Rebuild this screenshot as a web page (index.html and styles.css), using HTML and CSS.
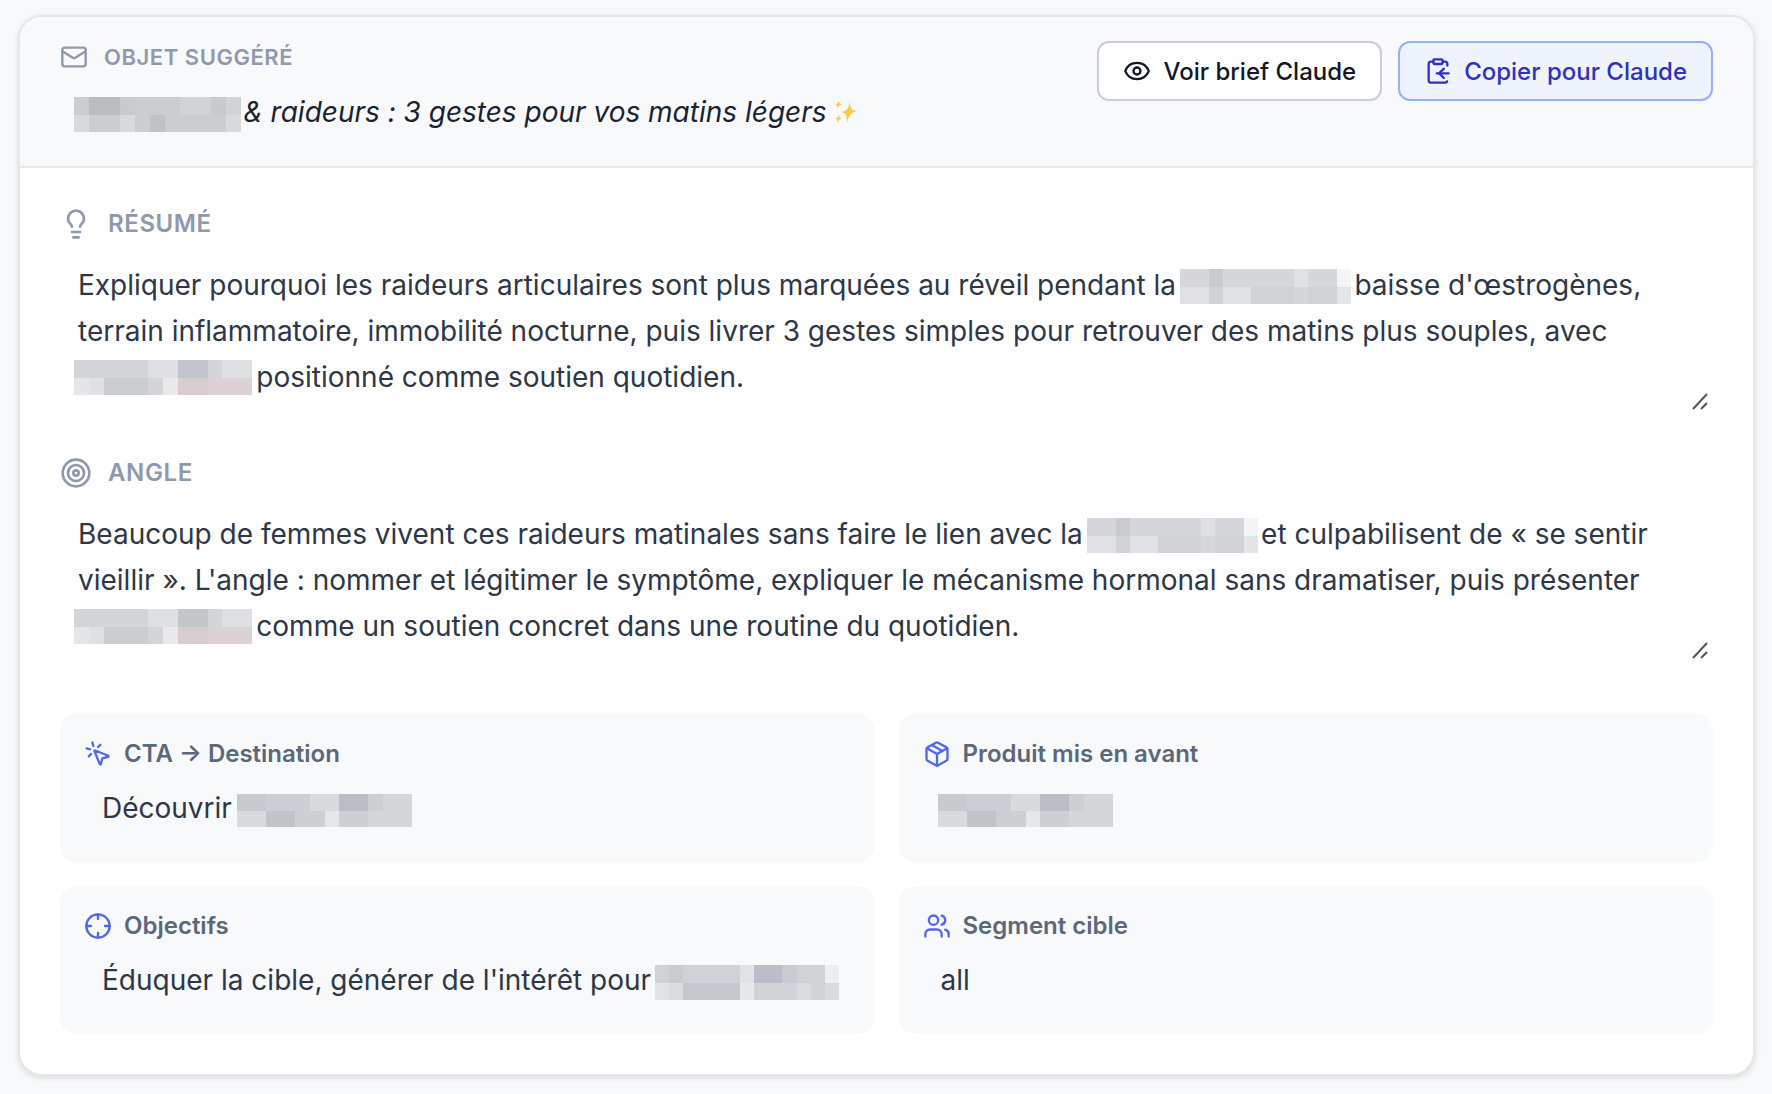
FILE: index.html
```html
<!DOCTYPE html>
<html lang="fr">
<head>
<meta charset="utf-8">
<meta name="viewport" content="width=device-width, initial-scale=1">
<title>Brief e-mail</title>
<link rel="stylesheet" href="styles.css">
</head>
<body>

<!-- masques des noms -->
<svg class="defs" aria-hidden="true">
    <symbol id="mask_sujet" viewBox="0 0 11 2" preserveAspectRatio="none">
        <path fill="#cbcdd1" d="M0 0h11v2H0z"/>
        <path fill="#b9bdc2" d="M1 0h2v1H1z"/>
        <path fill="#c7cbce" d="M3 0h1v1H3zM9 0h1v1H9z"/>
        <path fill="#d2d3d7" d="M7 0h2v1H7zM10 0h1v1h-1z"/>
        <path fill="#d9dadd" d="M0 1h1v1H0zM3 1h1v1H3zM10 1h1v1h-1z"/>
        <path fill="#bfc3c8" d="M5 1h1v1H5z"/>
    </symbol>
    <symbol id="mask_theme" viewBox="0 0 12 2" preserveAspectRatio="none">
        <path fill="#d6d7db" d="M0 0h12v2H0z"/>
        <path fill="#cacbce" d="M2 0h1v1H2z"/>
        <path fill="#dfe1e5" d="M8 0h1v1H8zM0 1h2v1H0zM3 1h2v1H3z"/>
        <path fill="#d0d2d5" d="M2 1h1v1H2zM5 1h3v1H5zM9 1h2v1H9z"/>
        <path fill="#f4f5f6" d="M11 0h1v1h-1z"/>
        <path fill="#e4e5e8" d="M11 1h1v1h-1z"/>
    </symbol>
    <symbol id="mask_marque" viewBox="0 0 12 2" preserveAspectRatio="none">
        <path fill="#d3d5d8" d="M0 0h12v2H0z"/>
        <path fill="#dfe0e3" d="M5 0h2v1H5zM10 0h2v1h-2zM1 1h1v1H1z"/>
        <path fill="#c2c6cb" d="M7 0h2v1H7z"/>
        <path fill="#e5e6e9" d="M0 1h1v1H0z"/>
        <path fill="#cacdd1" d="M2 1h3v1H2z"/>
        <path fill="#ebe8ea" d="M6 1h1v1H6z"/>
        <path fill="#d8ccd1" d="M7 1h2v1H7z"/>
        <path fill="#dcd1d4" d="M9 1h3v1H9z"/>
    </symbol>
    <symbol id="mask_produit" viewBox="0 0 12 2" preserveAspectRatio="none">
        <path fill="#cccfd3" d="M0 0h12v2H0z"/>
        <path fill="#c7cacf" d="M0 0h2v1H0z"/>
        <path fill="#d9dadd" d="M5 0h2v1H5zM0 1h2v1H0z"/>
        <path fill="#babdc6" d="M7 0h2v1H7z"/>
        <path fill="#d4d6da" d="M10 0h2v1h-2zM9 1h3v1H9z"/>
        <path fill="#c1c4c9" d="M2 1h2v1H2z"/>
        <path fill="#e6e7eb" d="M6 1h1v1H6z"/>
    </symbol>
    <symbol id="mask_objectif" viewBox="0 0 13 2" preserveAspectRatio="none">
        <path fill="#cfd2d6" d="M0 0h13v2H0z"/>
        <path fill="#c8cbcf" d="M1 0h1v1H1zM9 0h1v1H9z"/>
        <path fill="#e1e3e6" d="M6 0h1v1H6zM0 1h1v1H0z"/>
        <path fill="#bbbec8" d="M7 0h2v1H7z"/>
        <path fill="#edeef0" d="M12 0h1v1h-1z"/>
        <path fill="#dadce0" d="M1 1h1v1H1zM10 1h1v1h-1zM12 1h1v1h-1z"/>
        <path fill="#c5c8cd" d="M2 1h4v1H2z"/>
        <path fill="#e6e8ea" d="M6 1h1v1H6z"/>
    </symbol>
</svg>

<main class="card">
    <header class="card_head">
        <div class="subject">
            <label class="title title_small" for="objet">
                <svg class="icon" viewBox="0 0 24 24"><rect x="2" y="4" width="20" height="16" rx="2"/><path d="m22 7-8.97 5.7a1.94 1.94 0 0 1-2.06 0L2 7"/></svg>
                OBJET SUGGÉRÉ
            </label>
            <div class="field">
                <input id="objet" class="value value_italic" type="text" value="&nbsp;&nbsp;&nbsp;&nbsp;&nbsp;&nbsp;&nbsp;&nbsp;&nbsp;&nbsp;&nbsp;&nbsp;&nbsp;&nbsp;&nbsp;&nbsp;&nbsp;&nbsp;&nbsp;&nbsp;&nbsp;&amp; raideurs : 3 gestes pour vos matins légers">
                <svg class="mask mask_sujet"><use href="#mask_sujet"/></svg>
                <svg class="sparkles" viewBox="0 0 24 24"><path d="M16 1c0 7 1 10 8 10-7 1.500-9 4-11 12 0-8-1-10-6-11 6-1 8-4 9-11z"/><path d="M5 0c0 3 .5 4 3 4.500C5.500 5 4.500 6 3.500 9 3.500 6 3 5 1 4.500 3.500 4 4.200 3 5 0zM5 14c0 3 .5 4 3 4.500-2.500.5-3.500 1.500-4.500 5 0-3.500-.5-4.500-2.500-5 2.500-.5 3.200-1.500 4-4.500z"/></svg>
            </div>
        </div>
        <div class="actions">
            <button class="btn" type="button">
                <svg class="icon" viewBox="0 0 24 24"><path d="M2.062 12.348a1 1 0 0 1 0-.696 10.750 10.750 0 0 1 19.876 0 1 1 0 0 1 0 .696 10.750 10.750 0 0 1-19.876 0"/><circle cx="12" cy="12" r="3"/></svg>
                Voir brief Claude
            </button>
            <button class="btn btn_blue" type="button">
                <svg class="icon" viewBox="0 0 24 24"><path d="M11 14h10"/><path d="M16 4h2a2 2 0 0 1 2 2v1.344"/><path d="m17 18-4-4 4-4"/><path d="M8 4H6a2 2 0 0 0-2 2v14a2 2 0 0 0 2 2h12a2 2 0 0 0 1.793-1.113"/><rect x="8" y="2" width="8" height="4" rx="1"/></svg>
                Copier pour Claude
            </button>
        </div>
    </header>

    <div class="card_body">
        <section class="block">
            <label class="title" for="resume">
                <svg class="icon" viewBox="0 0 24 24"><path d="M15 14c.2-1 .7-1.700 1.500-2.500 1-.9 1.500-2.200 1.500-3.500A6 6 0 0 0 6 8c0 1 .2 2.200 1.500 3.500.7.7 1.300 1.500 1.500 2.500"/><path d="M9 18h6"/><path d="M10 22h4"/></svg>
                RÉSUMÉ
            </label>
            <div class="field">
                <textarea id="resume" class="value" rows="3">Expliquer pourquoi les raideurs articulaires sont plus marquées au réveil pendant la&#8239;&nbsp;&nbsp;&nbsp;&nbsp;&nbsp;&nbsp;&nbsp;&nbsp;&nbsp;&nbsp;&nbsp;&nbsp;&nbsp;&nbsp;&nbsp;&nbsp;&nbsp;&nbsp;&nbsp;&nbsp;&nbsp;&nbsp;baisse d'œstrogènes, terrain inflammatoire, immobilité nocturne, puis livrer 3 gestes simples pour retrouver des matins plus souples, avec &#8239;&nbsp;&nbsp;&nbsp;&nbsp;&nbsp;&nbsp;&nbsp;&nbsp;&nbsp;&nbsp;&nbsp;&nbsp;&nbsp;&nbsp;&nbsp;&nbsp;&nbsp;&nbsp;&nbsp;&nbsp;&nbsp;&nbsp;positionné comme soutien quotidien.</textarea>
                <svg class="mask mask_resume"><use href="#mask_theme"/></svg>
                <svg class="mask mask_marque"><use href="#mask_marque"/></svg>
                <svg class="grip" viewBox="0 0 20 20"><path d="M2 17 16 2M10 17l6-6"/></svg>
            </div>
        </section>

        <section class="block">
            <label class="title" for="angle">
                <svg class="icon" viewBox="0 0 24 24"><circle cx="12" cy="12" r="10"/><circle cx="12" cy="12" r="6"/><circle cx="12" cy="12" r="2"/></svg>
                ANGLE
            </label>
            <div class="field">
                <textarea id="angle" class="value" rows="3">Beaucoup de femmes vivent ces raideurs matinales sans faire le lien avec la&#8239;&nbsp;&nbsp;&nbsp;&nbsp;&nbsp;&nbsp;&nbsp;&nbsp;&nbsp;&nbsp;&nbsp;&nbsp;&nbsp;&nbsp;&nbsp;&nbsp;&nbsp;&nbsp;&nbsp;&nbsp;&nbsp;&nbsp;et culpabilisent de « se sentir vieillir ». L'angle : nommer et légitimer le symptôme, expliquer le mécanisme hormonal sans dramatiser, puis présenter &#8239;&nbsp;&nbsp;&nbsp;&nbsp;&nbsp;&nbsp;&nbsp;&nbsp;&nbsp;&nbsp;&nbsp;&nbsp;&nbsp;&nbsp;&nbsp;&nbsp;&nbsp;&nbsp;&nbsp;&nbsp;&nbsp;&nbsp;comme un soutien concret dans une routine du quotidien.</textarea>
                <svg class="mask mask_angle"><use href="#mask_theme"/></svg>
                <svg class="mask mask_marque"><use href="#mask_marque"/></svg>
                <svg class="grip" viewBox="0 0 20 20"><path d="M2 17 16 2M10 17l6-6"/></svg>
            </div>
        </section>

        <div class="grid">
            <div class="tile">
                <label class="tile_title" for="cta">
                    <svg class="icon" viewBox="0 0 24 24"><path d="M14 4.100 12 6"/><path d="m5.100 8-2.900-.8"/><path d="m6 12-1.900 2"/><path d="M7.200 2.200 8 5.100"/><path d="M9.037 9.690a.498.498 0 0 1 .653-.653l11 4.500a.5.5 0 0 1-.074.949l-4.349 1.041a1 1 0 0 0-.740.739l-1.040 4.350a.5.5 0 0 1-.950.074z"/></svg>
                    CTA → Destination
                </label>
                <div class="field">
                    <input id="cta" class="value" type="text" value="Découvrir">
                    <svg class="mask mask_cta"><use href="#mask_produit"/></svg>
                </div>
            </div>
            <div class="tile">
                <label class="tile_title" for="produit">
                    <svg class="icon" viewBox="0 0 24 24"><path d="M11 21.730a2 2 0 0 0 2 0l7-4A2 2 0 0 0 21 16V8a2 2 0 0 0-1-1.730l-7-4a2 2 0 0 0-2 0l-7 4A2 2 0 0 0 3 8v8a2 2 0 0 0 1 1.730z"/><path d="M12 22V12"/><path d="M3.290 7 12 12l8.710-5"/><path d="m7.500 4.270 9 5.150"/></svg>
                    Produit mis en avant
                </label>
                <div class="field">
                    <input id="produit" class="value" type="text">
                    <svg class="mask mask_produit"><use href="#mask_produit"/></svg>
                </div>
            </div>
            <div class="tile">
                <label class="tile_title" for="objectifs">
                    <svg class="icon" viewBox="0 0 24 24"><circle cx="12" cy="12" r="10"/><path d="M22 12h-4M6 12H2M12 6V2M12 22v-4"/></svg>
                    Objectifs
                </label>
                <div class="field">
                    <input id="objectifs" class="value" type="text" value="Éduquer la cible, générer de l'intérêt pour">
                    <svg class="mask mask_objectif"><use href="#mask_objectif"/></svg>
                </div>
            </div>
            <div class="tile">
                <label class="tile_title" for="segment">
                    <svg class="icon" viewBox="0 0 24 24"><path d="M16 21v-2a4 4 0 0 0-4-4H6a4 4 0 0 0-4 4v2"/><circle cx="9" cy="7" r="4"/><path d="M22 21v-2a4 4 0 0 0-3-3.870"/><path d="M16 3.130a4 4 0 0 1 0 7.750"/></svg>
                    Segment cible
                </label>
                <div class="field">
                    <input id="segment" class="value" type="text" value="all">
                </div>
            </div>
        </div>
    </div>
</main>

</body>
</html>
```
FILE: styles.css
```css
*
{
box-sizing: border-box;
}

body
{
margin: 0;
padding: 15px 17px 18px 18px;
background-color: #f8f9fb;
font-family: Inter, "Liberation Sans", sans-serif;
color: #2d3748;
}

.defs
{
display: none;
}

.icon
{
width: 28px;
height: 28px;
flex: none;
fill: none;
stroke: currentColor;
stroke-width: 2;
stroke-linecap: round;
stroke-linejoin: round;
}

.card
{
border: 2px solid #e5e7eb;
border-radius: 24px;
background-color: white;
box-shadow: 0 2px 6px rgba(0, 0, 0, 0.12);
overflow: hidden;
}

.card_head
{
display: flex;
align-items: flex-start;
gap: 24px;
padding: 24px 40px;
border-bottom: 2px solid #e5e7eb;
background-color: #f8f9fb;
}

.subject
{
flex: 1;
}

.actions
{
display: flex;
gap: 16px;
}

.btn
{
display: flex;
align-items: center;
gap: 12px;
height: 60px;
padding: 0 24px;
border: 2px solid #c9ccd8;
border-radius: 12px;
background-color: white;
color: #111827;
font-family: inherit;
font-size: 24px;
font-weight: 500;
white-space: nowrap;
cursor: pointer;
}

.btn_blue
{
border-color: #95b0fb;
background-color: #eef3fe;
color: #2f30c4;
}

.title
{
display: flex;
align-items: center;
gap: 16px;
margin-bottom: 8px;
color: #8e99ae;
font-size: 24px;
font-weight: 600;
line-height: 32px;
letter-spacing: 0.025em;
}

.title .icon
{
width: 32px;
height: 32px;
}

.title_small
{
margin-bottom: 9px;
font-size: 22px;
}

.title_small .icon
{
width: 28px;
height: 28px;
}

.field
{
position: relative;
}

.value
{
display: block;
width: 100%;
height: 60px;
margin: 0;
padding: 0 16px;
border: 2px solid transparent;
border-radius: 8px;
outline: none;
background-color: transparent;
color: #2d3748;
font-family: inherit;
font-size: 28px;
line-height: 46px;
}

.value:focus
{
border-color: #95b0fb;
}

.value_italic
{
color: #1a2332;
font-style: italic;
font-feature-settings: "calt" 0;
}

textarea.value
{
height: auto;
padding: 12px 16px;
resize: vertical;
}

/* larger handle, drawn over the browser's own */
.grip
{
position: absolute;
right: 2px;
bottom: 2px;
width: 20px;
height: 20px;
background-color: white;
fill: none;
stroke: #555;
stroke-width: 2;
pointer-events: none;
}

.card_body
{
padding: 40px;
}

.block
{
margin-bottom: 43px;
}

.grid
{
display: grid;
grid-template-columns: 1fr 1fr;
gap: 24px;
padding-top: 8px;
}

.tile
{
padding: 24px;
border-radius: 16px;
background-color: #f8f9fb;
}

.tile_title
{
display: flex;
align-items: center;
gap: 12px;
margin-bottom: 8px;
color: #5b677b;
font-size: 24px;
font-weight: 600;
line-height: 32px;
}

.tile_title .icon
{
color: #5167f2;
}

/* masks lie over the text of the fields */
.mask
{
position: absolute;
height: 35px;
shape-rendering: crispEdges;
pointer-events: none;
}

.mask_sujet
{
left: 14px;
top: 15px;
width: 167px;
}

.mask_resume
{
left: 1120px;
top: 21px;
width: 171px;
}

.mask_angle
{
left: 1027px;
top: 21px;
width: 171px;
}

.mask_marque
{
left: 14px;
top: 112px;
width: 178px;
}

.mask_cta
{
left: 153px;
top: 16px;
width: 175px;
height: 33px;
}

.mask_produit
{
left: 15px;
top: 16px;
width: 175px;
height: 33px;
}

.mask_objectif
{
left: 571px;
top: 15px;
width: 184px;
}

.sparkles
{
position: absolute;
left: 774px;
top: 18px;
width: 24px;
height: 24px;
fill: #fbc94b;
pointer-events: none;
}
```
